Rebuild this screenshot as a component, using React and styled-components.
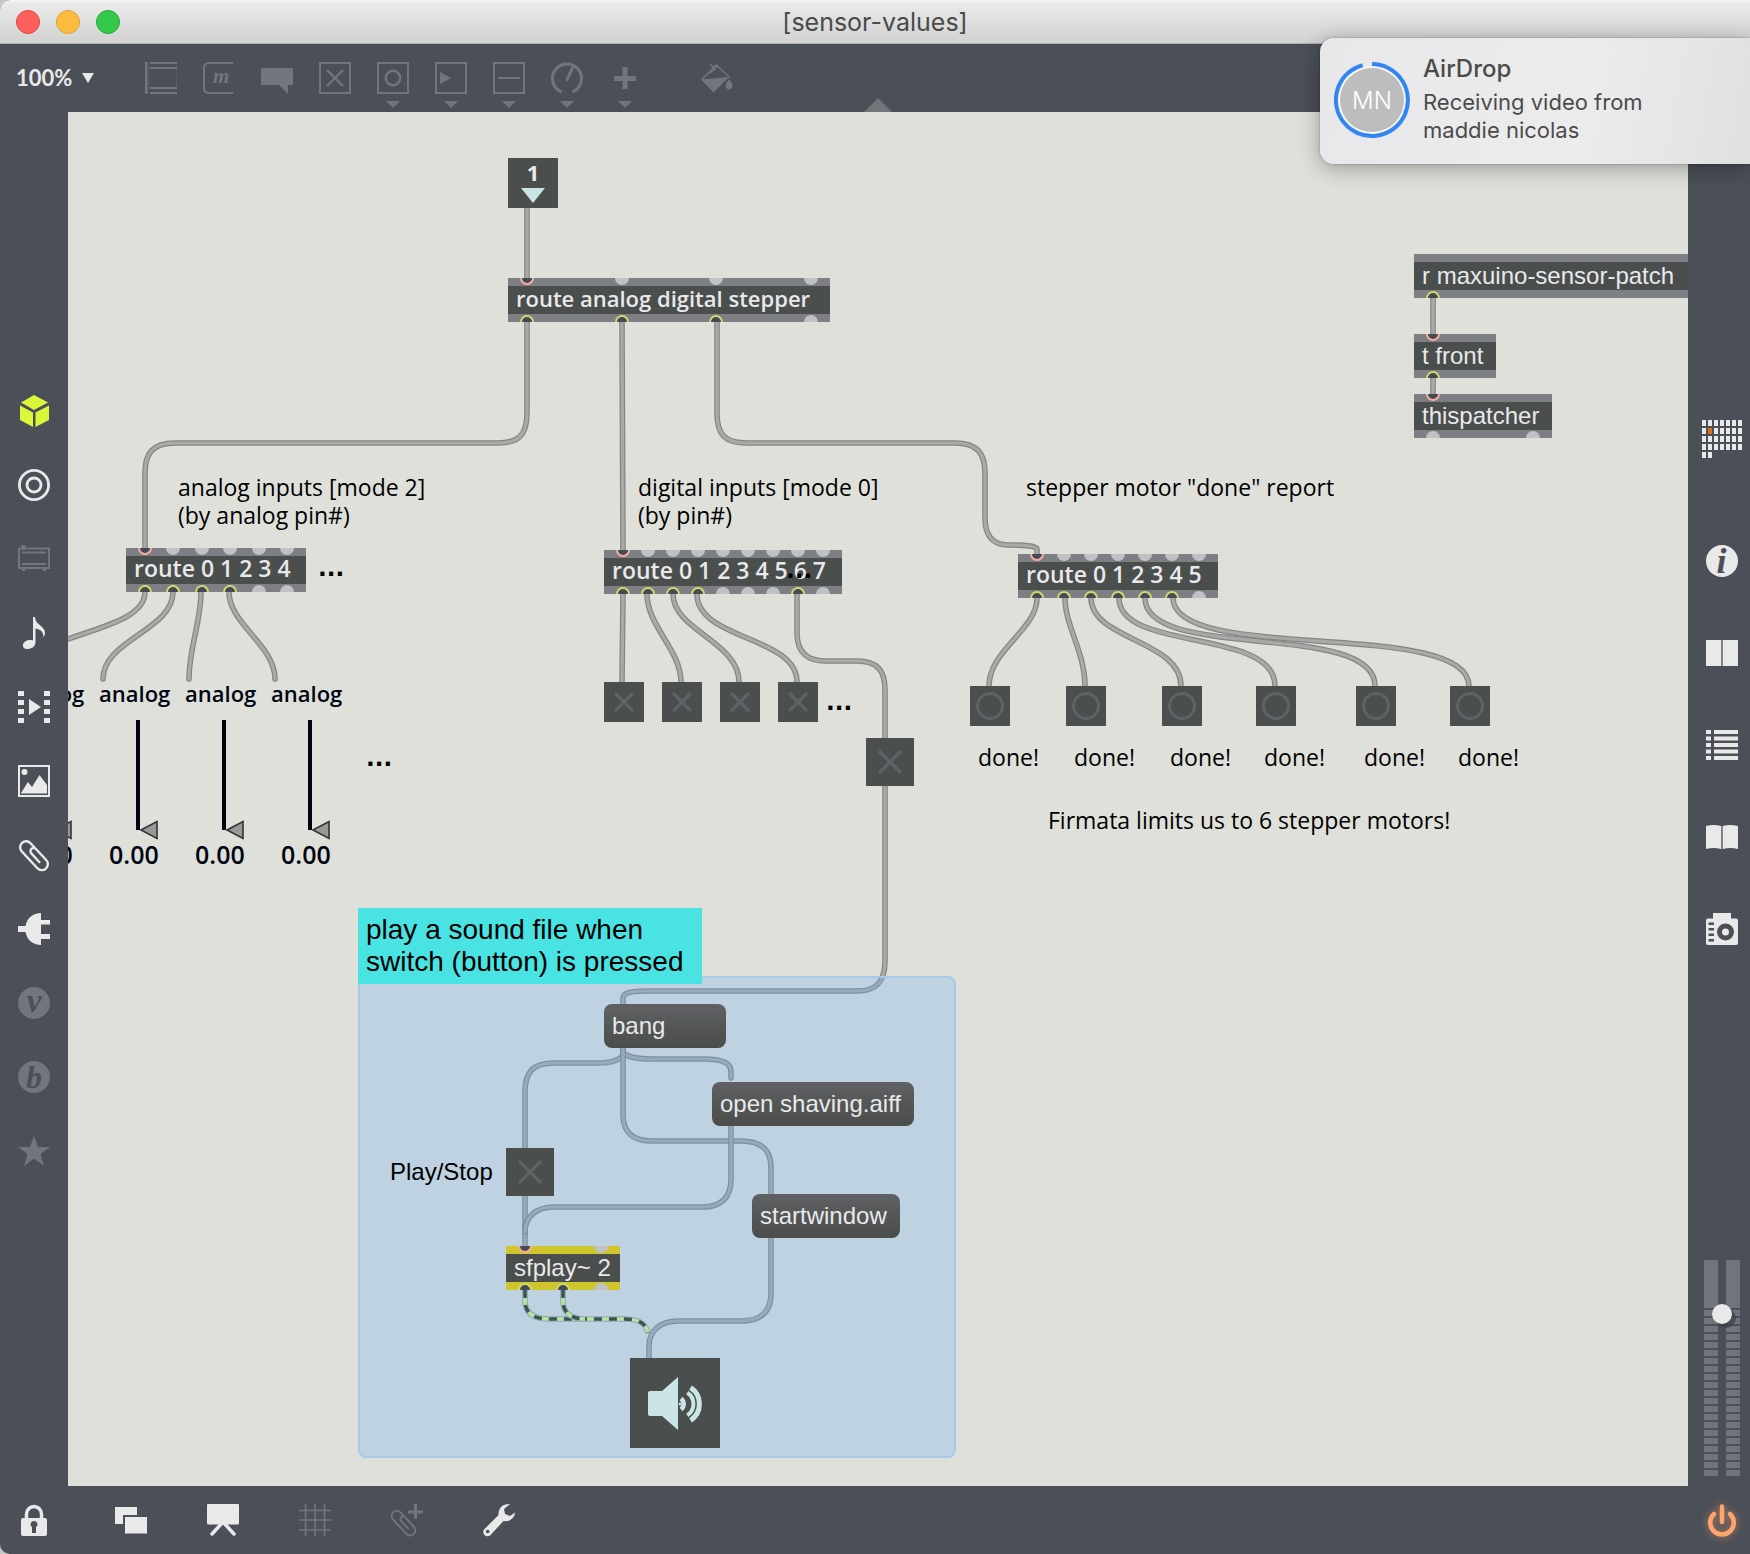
import React from "react";
import styled, { createGlobalStyle, css } from "styled-components";

const humanist = '"Open Sans", "Noto Sans", sans-serif';
const grotesque = '"Liberation Sans", Arial, sans-serif';
const system = 'Inter, "Liberation Sans", sans-serif';

const chrome = "#4b4f57";
const paper = "#dfe0da";
const dim = "#72757e";
const bright = "#e9e9e9";
const box = "#4a4e4c";
const boxInk = "#e9e9ec";

const GlobalStyle = createGlobalStyle`
  * { box-sizing: border-box; }
  body { margin: 0; background: #c4c6c8; font-family: ${system}; }
  button, input, select { font: inherit; color: inherit; }
`;

/* ---------- window frame ---------- */

const Window = styled.div`
  display: grid;
  grid-template-rows: 44px 68px 1fr 68px;
  min-height: 100vh;
  border-radius: 10px 0 0 10px;
  overflow: hidden;
  background: ${chrome};
`;

const TitleBar = styled.header`
  display: grid;
  grid-template-columns: 1fr auto 1fr;
  align-items: center;
  padding: 0 16px;
  background: linear-gradient(#f4f4f4, #e9e9e9 4px, #d2d2d2);
  border-bottom: 1px solid #abafaf;
`;

const TrafficLights = styled.div`
  display: flex;
  gap: 16px;
`;

const Light = styled.button`
  width: 24px;
  height: 24px;
  padding: 0;
  border: 1px solid ${(p) => p.$rim};
  border-radius: 50%;
  background: ${(p) => p.$fill};
`;

const Title = styled.h1`
  margin: 0;
  font-size: 25px;
  font-weight: 400;
  line-height: 28px;
  color: #4a4a4a;
`;

const ToolBar = styled.nav`
  display: flex;
  align-items: flex-start;
  gap: 26px;
  padding: 18px 16px 0;
  color: ${dim};
`;

const Zoom = styled.label`
  display: flex;
  align-items: center;
  gap: 8px;
  width: 103px;
  height: 32px;
  color: ${bright};
`;

const ZoomSelect = styled.select`
  appearance: none;
  width: 58px;
  padding: 0;
  border: 0;
  background: transparent;
  font-family: Lato, "Open Sans", sans-serif;
  font-size: 22px;
  font-weight: 700;
  line-height: 32px;
`;

const IconButton = styled.button`
  display: flex;
  flex: none;
  align-items: center;
  justify-content: center;
  width: 32px;
  height: ${(p) => (p.$tall ? "46px" : "32px")};
  margin-left: ${(p) => (p.$apart ? "34px" : "0")};
  padding: 0;
  border: 0;
  background: transparent;
  color: ${(p) => p.$tone || "inherit"};

  svg {
    display: block;
    flex: none;
    overflow: visible;
  }
`;

const Middle = styled.div`
  display: grid;
  grid-template-columns: 68px 1fr 62px;
`;

const LeftRail = styled.nav`
  display: flex;
  flex-direction: column;
  align-items: center;
  gap: 42px;
  padding-top: 283px;
`;

const RightRail = styled.nav`
  display: flex;
  flex-direction: column;
  align-items: center;
  justify-content: space-between;
  padding: 311px 0 10px;
  margin-left: 6px;
`;

const RailGroup = styled.div`
  display: flex;
  flex-direction: column;
  align-items: center;
  gap: 60px;

  & > :first-child {
    margin-bottom: 30px;
  }
`;

const BottomBar = styled.nav`
  display: flex;
  align-items: center;
  gap: 60px;
  padding: 0 12px 0 18px;
  color: ${bright};

  & > :first-child {
    margin-right: 5px;
  }
  & > :last-child {
    margin-left: auto;
  }
`;

/* ---------- patcher canvas ---------- */

const Frame = styled.main`
  position: relative;
  min-width: 0;
`;

const Handle = styled.svg`
  position: absolute;
  bottom: 100%;
  left: 50%;
  margin-left: -14px;
  display: block;
`;

const Patcher = styled.div`
  position: relative;
  height: 100%;
  min-height: 1374px;
  overflow: hidden;
  background: ${paper};
`;

/* The patch is scrolled by (68, 112), so its left edge is partly out of view. */
const Sheet = styled.div`
  position: absolute;
  left: -68px;
  top: -112px;
  width: 1800px;
  height: 1600px;
`;

const Cables = styled.svg`
  position: absolute;
  left: 0;
  top: 0;
`;

const placed = css`
  position: absolute;
  left: ${(p) => p.$x}px;
  top: ${(p) => p.$y}px;
`;

const ObjectFrame = styled.div`
  ${placed}
  width: ${(p) => p.$w}px;
  background: ${box};
`;

const PortStrip = styled.div`
  display: flex;
  justify-content: space-between;
  height: 8px;
  padding: 0 12px;
  align-items: ${(p) => (p.$outlets ? "flex-end" : "flex-start")};
  background: ${(p) => (p.$signal ? "#cfc52c" : "#7e7f84")};
`;

const Port = styled.span`
  width: 14px;
  height: 7px;
  border: ${(p) => (p.$live ? `2px solid ${p.$outlet ? "#cfd96c" : "#f4ada1"}` : "0")};
  ${(p) =>
    p.$outlet
      ? "border-bottom: 0; border-radius: 7px 7px 0 0;"
      : "border-top: 0; border-radius: 0 0 7px 7px;"}
  background: ${(p) => (p.$live ? "#464a54" : "#c0c1c4")};
`;

const ObjectText = styled.div`
  height: 28px;
  padding-left: 8px;
  white-space: nowrap;
  color: ${boxInk};
  font-family: ${(p) => (p.$arial ? grotesque : humanist)};
  font-size: ${(p) => p.$size}px;
  font-weight: ${(p) => (p.$arial ? 400 : 600)};
  line-height: ${(p) => (p.$arial ? "28px" : "24px")};
`;

const MessageButton = styled.button`
  ${placed}
  width: ${(p) => p.$w}px;
  height: 44px;
  padding: 0 8px;
  border: 0;
  border-radius: 8px;
  background: linear-gradient(#606165, #555857 45%, #4a4d4b);
  color: ${boxInk};
  font-family: ${grotesque};
  font-size: 24px;
  line-height: 28px;
  text-align: left;
  white-space: nowrap;
`;

const ToggleLabel = styled.label`
  ${placed}
  display: block;
  width: ${(p) => p.$size}px;
  height: ${(p) => p.$size}px;
  background: ${box};

  svg {
    display: block;
  }
`;

const HiddenInput = styled.input`
  position: absolute;
  inset: 0;
  width: 100%;
  height: 100%;
  margin: 0;
  opacity: 0;
`;

const SquareButton = styled.button`
  ${placed}
  width: ${(p) => p.$size}px;
  height: ${(p) => p.$size}px;
  padding: 0;
  border: 0;
  background: ${box};

  svg {
    display: block;
  }
`;

const Comment = styled.p`
  ${placed}
  margin: 0;
  white-space: pre;
  color: #000;
  font-family: ${(p) => (p.$arial ? grotesque : humanist)};
  font-size: ${(p) => (p.$arial ? "24px" : "23px")};
  line-height: 28px;
`;

const Dots = styled(Comment)`
  font-family: "DejaVu Sans", sans-serif;
  font-size: 23px;
  font-weight: 700;
`;

const Note = styled(Comment)`
  width: 344px;
  height: 76px;
  padding: 6px 8px;
  background: #4ae3e3;
  font-family: ${grotesque};
  font-size: 28px;
  line-height: 32px;
`;

const Panel = styled.div`
  ${placed}
  width: 598px;
  height: 482px;
  border: 2px solid #a9c9ea;
  border-radius: 8px;
  background: rgba(106, 175, 243, 0.28);
`;

const InletBox = styled.div`
  ${placed}
  display: flex;
  flex-direction: column;
  align-items: center;
  gap: 2px;
  width: 50px;
  height: 50px;
  background: ${box};
  color: ${boxInk};
  font-family: ${humanist};
  font-size: 22px;
  font-weight: 700;
  line-height: 28px;
`;

const AnalogStrip = styled.div`
  ${placed}
  display: flex;
  flex-direction: column;
  width: 80px;
  color: #000512;
  font-family: ${humanist};
  font-weight: 600;
`;

const AnalogName = styled.label`
  font-size: 22px;
  line-height: 28px;
`;

const Fader = styled.div`
  position: relative;
  width: 32px;
  height: 120px;
  margin: 13px 0 0 30px;

  svg {
    display: block;
  }
  input {
    writing-mode: vertical-lr;
    direction: rtl;
  }
`;

const NumberBox = styled.input`
  width: 64px;
  height: 28px;
  margin-left: 10px;
  padding: 0;
  border: 0;
  background: transparent;
  font-size: 25px;
  line-height: 28px;
`;

/* ---------- right-hand level meter ---------- */

const Gain = styled.div`
  position: relative;
  width: 36px;
  height: 216px;

  svg {
    display: block;
    overflow: visible;
  }
  input {
    writing-mode: vertical-lr;
    direction: rtl;
  }
`;

/* ---------- notification ---------- */

const Banner = styled.aside`
  position: absolute;
  top: 38px;
  right: 0;
  display: flex;
  gap: 13px;
  width: 430px;
  height: 126px;
  padding: 17px 14px;
  border-radius: 14px 0 0 14px;
  background: linear-gradient(100deg, #e8e8eb, #ececec 60%, #dfe1e1);
  box-shadow: 0 4px 22px rgba(0, 0, 0, 0.32), 0 0 2px rgba(0, 0, 0, 0.35);
  color: #4b4b4b;
`;

const Avatar = styled.div`
  display: grid;
  place-items: center;
  width: 76px;
  height: 76px;
  margin-top: 7px;
  color: #fff;
  font-size: 24px;
  font-weight: 300;

  & > * {
    grid-area: 1 / 1;
  }
`;

const BannerTitle = styled.h2`
  margin: 0 0 5px;
  font-size: 24px;
  font-weight: 500;
  line-height: 28px;
`;

const BannerText = styled.p`
  margin: 0;
  font-size: 22px;
  line-height: 28px;
`;

/* ---------- drawings ---------- */

const serifItalic = {
  fontFamily: '"Liberation Serif", serif',
  fontStyle: "italic",
  fontWeight: 700,
};

const Glyph = ({ h = 32, w = 32, children }) => (
  <svg width={w} height={h} viewBox={`0 0 ${w} ${h}`} fill="currentColor" aria-hidden="true">
    {children}
  </svg>
);

const SquareOutline = () => (
  <rect x="1" y="1" width="30" height="30" fill="none" stroke="currentColor" strokeWidth="2" />
);

const clipPath =
  "M5.5 1 V-11 a6 6 0 0 0 -12 0 V12 a6 6 0 0 0 12 0 V-3 a3.2 3.2 0 0 0 -6.4 0 V9";

const tools = [
  {
    name: "Object",
    art: (
      <>
        <path d="M0 0h2.5v32H0zM5 0h27v2H5zM5 5h27v2H5zM5 25h27v2H5zM5 30h27v2H5z" />
        <path d="M3 0h1v32H3zM31 7h1v18h-1z" opacity=".3" />
      </>
    ),
  },
  {
    name: "Message",
    art: (
      <>
        <path d="M30 1H6Q1 1 1 6V26Q1 31 6 31H30" fill="none" stroke="currentColor" strokeWidth="2" />
        <text x="10" y="21" fontSize="21" style={serifItalic}>m</text>
      </>
    ),
  },
  { name: "Comment", art: <path d="M0 6h32v17h-5v9l-9-9H0z" /> },
  {
    name: "Toggle",
    art: (
      <>
        <SquareOutline />
        <path d="M8 8l16 16M24 8L8 24" fill="none" stroke="currentColor" strokeWidth="2.4" />
      </>
    ),
  },
  {
    name: "Button",
    menu: true,
    art: (
      <>
        <SquareOutline />
        <circle cx="16" cy="16" r="7.2" fill="none" stroke="currentColor" strokeWidth="2.4" />
      </>
    ),
  },
  { name: "Number", menu: true, art: <><SquareOutline /><path d="M5 10l11 6-11 6z" /></> },
  { name: "Slider", menu: true, art: <><SquareOutline /><path d="M5 15h22v2H5z" /></> },
  {
    name: "Dial",
    menu: true,
    art: (
      <path
        d="M9.500 29.500A14.500 14.500 0 1 1 22.500 29.500M16 17.500L21.500 6"
        fill="none"
        stroke="currentColor"
        strokeWidth="3"
        strokeLinecap="round"
      />
    ),
  },
  { name: "Add", menu: true, art: <path d="M13.500 5h5v9H27v5h-8.500v8h-5v-8H5v-5h8.500z" /> },
  {
    name: "Format",
    apart: true,
    art: (
      <>
        <path d="M15 3L29 15.500M15 3L1 17.500M9 2l5.500 6" fill="none" stroke="currentColor" strokeWidth="1.600" />
        <path d="M17 3l-8 8" stroke="currentColor" strokeWidth="1.400" />
        <path d="M0 17.500L28 15 12.500 30.500zM28 17c3 4 4 6 3 8.500a3.200 3.200 0 0 1-6 0C24 23 25.500 21 28 17z" />
      </>
    ),
  },
];

const leftItems = [
  {
    name: "Objects",
    tone: "#dcf63a",
    art: <path d="M16 0L30 7.500 16 15 3 7.500zM2 10.500L15 17.500V32L2 25zM31 10.500L17.500 17.500V32L31 25z" />,
  },
  {
    name: "Max",
    tone: bright,
    art: (
      <g fill="none" stroke="currentColor" strokeWidth="2.800">
        <circle cx="16" cy="16" r="14.600" />
        <circle cx="16" cy="16" r="7" />
      </g>
    ),
  },
  {
    name: "Devices",
    tone: dim,
    art: (
      <>
        <path d="M1 5.500H31V25H1zM4 9.500H28M4 21H28" fill="none" stroke="currentColor" strokeWidth="2" />
        <circle cx="5.500" cy="4.500" r="2.500" />
        <circle cx="5.500" cy="26" r="2.200" />
        <circle cx="26.500" cy="26" r="2.200" />
      </>
    ),
  },
  {
    name: "Audio",
    tone: bright,
    art: (
      <path d="M15 0h2c.5 5 3 6.500 6 9 4.500 4 5 7.500 2.500 11.500 0-5-2-8-8-9V25c0 5-4.500 7-8 7s-5-2-4.500-4.500C5.500 24 11 22 15 23.500z" />
    ),
  },
  {
    name: "Video",
    tone: bright,
    art: (
      <path d="M0 0h6v5H0zM0 9h6v5H0zM0 18h6v5H0zM0 27h6v5H0zM26 0h6v5h-6zM26 9h6v5h-6zM26 18h6v5h-6zM26 27h6v5h-6zM11 8l12 8-12 8z" />
    ),
  },
  {
    name: "Images",
    tone: bright,
    art: (
      <>
        <SquareOutline />
        <path d="M3 28l7-11 4 5 7.500-12L29 20v8.500H3z" />
        <circle cx="6.500" cy="7" r="3" />
      </>
    ),
  },
  {
    name: "Clippings",
    tone: bright,
    art: (
      <path d={clipPath} transform="translate(16 16) rotate(-43)" fill="none" stroke="currentColor" strokeWidth="2.400" strokeLinecap="round" />
    ),
  },
  {
    name: "Plug-ins",
    tone: bright,
    art: <path d="M0 13h7.500C9 5 15 0 23 0v7h9v4.500h-9v9.500h9v5h-9v6C15 32 9 27 7.500 19H0z" />,
  },
  {
    name: "Vizzie",
    tone: dim,
    art: (
      <>
        <circle cx="16" cy="16" r="16" />
        <text x="16" y="25" fontSize="33" textAnchor="middle" fill={chrome} style={serifItalic}>v</text>
      </>
    ),
  },
  {
    name: "Beap",
    tone: dim,
    art: (
      <>
        <circle cx="16" cy="16" r="16" />
        <text x="16" y="27" fontSize="32" textAnchor="middle" fill={chrome} style={serifItalic}>b</text>
      </>
    ),
  },
  {
    name: "Favorites",
    tone: dim,
    art: <path d="M16 1l4 11h12l-9.500 7L26 31l-10-7.500L6 31l3.500-12L0 12h12z" />,
  },
];

const rightItems = [
  {
    name: "Inspector",
    art: (
      <>
        <circle cx="16" cy="16" r="16" />
        <text x="15.500" y="28" fontSize="36" textAnchor="middle" fill={chrome} style={serifItalic}>i</text>
      </>
    ),
  },
  {
    name: "Reference",
    art: <><path d="M0 3h15v26H0zM17 3h15v26H17z" /><path d="M15 3h2v26h-2z" fill="#7d858a" /></>,
  },
  {
    name: "Console",
    art: (
      <path d="M0 1h5v4H0zM8 1h24v4H8zM0 7.500h5v4H0zM8 7.500h24v4H8zM0 14h5v4H0zM8 14h24v4H8zM0 20.500h5v4H0zM8 20.500h24v4H8zM0 27h5v4H0zM8 27h24v4H8z" />
    ),
  },
  {
    name: "Lessons",
    art: (
      <>
        <path d="M0 5Q8 3 15 5V28Q8 26 0 28zM17 5Q24 3 32 5V28Q24 26 17 28z" />
        <path d="M15 5h2v23h-2z" fill="#7d858a" />
      </>
    ),
  },
  {
    name: "Snapshots",
    art: (
      <>
        <path d="M7 0h18v5.500h5q2 0 2 2V30q0 2-2 2H2q-2 0-2-2V7.500q0-2 2-2h5z" />
        <circle cx="19.500" cy="19" r="6" fill="none" stroke={chrome} strokeWidth="5" />
        <path d="M2.500 9.500h5.500v2.500H2.500zM2.500 15h5.500v2.500H2.500zM2.500 20.500h5.500v2.500H2.500zM2.500 26h5.500v2.500H2.500z" fill={chrome} />
      </>
    ),
  },
];

const bottomItems = [
  {
    name: "Lock",
    art: (
      <>
        <path d="M8.500 16V10a7.500 7.500 0 0 1 15 0v6" fill="none" stroke="currentColor" strokeWidth="3.500" />
        <path d="M5 14h22q2 0 2 2v14q0 2-2 2H5q-2 0-2-2V16q0-2 2-2z" />
        <path d="M16 17a3.300 3.300 0 0 1 2 6v6h-4v-6a3.300 3.300 0 0 1 2-6z" fill={chrome} />
      </>
    ),
  },
  {
    name: "New View",
    art: <path d="M0 3h22v8H8v9H0zM10 13h22v16.500H10z" />,
  },
  {
    name: "Presentation",
    art: (
      <>
        <path d="M1 0h30q1 0 1 1v18q0 1.500-1 1.500H1q-1 0-1-1.500V1q0-1 1-1z" />
        <path d="M16 18L5 30M16 18l11 12" fill="none" stroke="currentColor" strokeWidth="3.500" strokeLinecap="round" />
      </>
    ),
  },
  {
    name: "Grid",
    tone: dim,
    art: <path d="M6.500 0v32M16 0v32M25.500 0v32M0 6.500h32M0 16h32M0 26h32" stroke="currentColor" strokeWidth="1.600" />,
  },
  {
    name: "Add Clipping",
    tone: dim,
    art: (
      <>
        <path d={clipPath} transform="translate(12.500 18.500) rotate(-43) scale(.86)" fill="none" stroke="currentColor" strokeWidth="2.200" strokeLinecap="round" />
        <path d="M23 0h3v6.500h6v3h-6V15h-3V9.500h-6v-3h6z" />
      </>
    ),
  },
  {
    name: "Debug",
    art: (
      <>
        <path d="M27 0C20-.500 15 4 15.500 11L1.500 25a4.200 4.200 0 0 0 6 6L20.500 17C27 18 31.500 14 32 8.500L27 12 22 10 21 5z" />
        <circle cx="4.700" cy="27.500" r="1.800" fill={chrome} />
      </>
    ),
  },
];

const Matrix = () => (
  <Glyph w={40} h={38}>
    {Array.from({ length: 30 }, (_, i) => (
      <rect
        key={i}
        x={(i % 7) * 6}
        y={Math.floor(i / 7) * 8}
        width="4"
        height="6"
        fill={i === 8 ? "#d8701f" : bright}
      />
    ))}
  </Glyph>
);

const PowerIcon = () => (
  <Glyph>
    <g
      fill="none"
      stroke="#ffa46c"
      strokeWidth="4.500"
      strokeLinecap="round"
      style={{ filter: "drop-shadow(0 0 4px rgba(255,164,108,.6))" }}
    >
      <path d="M16 2.500V18M8 10A11.800 11.800 0 1 0 24 10" />
    </g>
  </Glyph>
);

/* ---------- patch parts ---------- */

function PatchObject({ x, y, w, text, ins, liveIns = [], outs, liveOuts = [], arial, signal, size }) {
  const ports = (count, live, outlet) =>
    Array.from({ length: count }, (_, i) => (
      <Port key={i} $live={live.includes(i)} $outlet={outlet} />
    ));
  return (
    <ObjectFrame $x={x} $y={y} $w={w}>
      <PortStrip $signal={signal}>{ports(ins, liveIns, false)}</PortStrip>
      <ObjectText $arial={arial} $size={size || (arial ? 24 : 23)}>{text}</ObjectText>
      <PortStrip $signal={signal} $outlets>{ports(outs, liveOuts, true)}</PortStrip>
    </ObjectFrame>
  );
}

function Toggle({ x, y, size = 40, name, id }) {
  const a = size / 4 + 1;
  const b = size - a;
  return (
    <ToggleLabel $x={x} $y={y} $size={size}>
      <HiddenInput type="checkbox" id={id} aria-label={name} />
      <svg width={size} height={size} aria-hidden="true">
        <path d={`M${a} ${a}L${b} ${b}M${b} ${a}L${a} ${b}`} stroke="#606166" strokeWidth="3.200" />
      </svg>
    </ToggleLabel>
  );
}

function Bang({ x, y }) {
  return (
    <SquareButton $x={x} $y={y} $size={40} aria-label="bang">
      <svg width="40" height="40" aria-hidden="true">
        <circle cx="20" cy="20" r="12.500" fill="none" stroke="#606166" strokeWidth="3.200" />
      </svg>
    </SquareButton>
  );
}

function Analog({ x, pin }) {
  return (
    <AnalogStrip $x={x} $y={679}>
      <AnalogName htmlFor={`pin-${pin}`}>analog</AnalogName>
      <Fader>
        <svg width="32" height="120" aria-hidden="true">
          <path d="M7 0h4v110H7z" fill="#000512" />
          <path d="M12 110l16-8.500v17z" fill="#999a98" stroke="#333" strokeWidth="1.600" />
        </svg>
        <HiddenInput type="range" id={`pin-${pin}`} defaultValue={0} />
      </Fader>
      <NumberBox defaultValue="0.00" aria-label={`analog ${pin} value`} />
    </AnalogStrip>
  );
}

const cables = [
  "M527 208V278",
  "M527 322V413C527 435 519 443 497 443H175C153 443 145 453 145 473V548",
  "M622 322L623 550",
  "M717 322V413C717 435 725 443 747 443H955C977 443 985 453 985 473V518C985 536 993 545 1008 545C1024 545 1037 546 1037 549V554",
  "M1433 298V334",
  "M1433 378V394",
  "M145 592C145 636 17 632 17 681",
  "M173 592C173 630 103 640 103 679",
  "M201 592C201 622 189 648 189 679",
  "M229 592C229 624 275 645 275 679",
  "M623 594L622 682",
  "M647 594C647 626 681 650 681 682",
  "M673 594C673 630 739 642 739 682",
  "M697 594C697 640 797 636 797 682",
  "M797 594V633C797 653 808 661 825 661H857C877 661 885 670 885 690V738",
  "M1037 598C1037 630 989 650 989 686",
  "M1065 598C1065 626 1085 652 1085 686",
  "M1091 598C1091 640 1181 640 1181 686",
  "M1119 598C1119 652 1275 628 1275 686",
  "M1145 598C1145 662 1375 620 1375 686",
  "M1173 598C1173 664 1469 618 1469 686",
  "M885 786V961C885 981 877 991 857 991H648C630 991 623 993 623 998V1004",
  "M623 1048V1055C619 1061 607 1063 597 1063H554C533 1063 525 1072 525 1092V1148",
  "M623 1048V1053C629 1058 643 1059 652 1059H704C725 1059 731 1064 731 1072V1078",
  "M623 1048V1115C623 1133 634 1141 652 1141H741C762 1141 771 1150 771 1168V1194",
  "M525 1196V1246",
  "M731 1126V1180C731 1197 721 1207 703 1207H554C536 1207 525 1217 525 1232",
  "M771 1238V1293C771 1311 762 1321 741 1321H678C659 1321 649 1332 649 1346V1358",
];

const signalCables = [
  "M525 1290V1301C525 1313 533 1319 550 1319H625C640 1319 646 1324 648 1333",
  "M563 1290V1301C563 1312 570 1319 585 1319",
];

function Patch() {
  return (
    <Sheet>
      <Cables width="1800" height="1600" fill="none" strokeLinecap="round" aria-hidden="true">
        {cables.map((d) => (
          <g key={d}>
            <path d={d} stroke="#858584" strokeWidth="5.600" />
            <path d={d} stroke="#a9a9a7" strokeWidth="3.200" />
          </g>
        ))}
      </Cables>
      <Panel $x={358} $y={976} />
      <Cables width="1800" height="1600" fill="none" aria-hidden="true">
        {signalCables.map((d) => (
          <g key={d}>
            <path d={d} stroke="#92a7bd" strokeWidth="5.600" />
            <path d={d} stroke="#b6e69b" strokeWidth="3.600" />
            <path d={d} stroke="#3c5453" strokeWidth="3.600" strokeDasharray="8 7" />
          </g>
        ))}
      </Cables>

      <InletBox $x={508} $y={158}>
        1
        <svg width="24" height="15" aria-hidden="true">
          <path d="M0 0h24L12 15z" fill="#cbe5e7" />
        </svg>
      </InletBox>
      <PatchObject x={508} y={278} w={322} text="route analog digital stepper" size={22} ins={4} liveIns={[0]} outs={4} liveOuts={[0, 1, 2]} />
      <PatchObject x={1414} y={254} w={290} text="r maxuino-sensor-patch" ins={0} outs={1} liveOuts={[0]} arial />
      <PatchObject x={1414} y={334} w={82} text="t front" ins={1} liveIns={[0]} outs={1} liveOuts={[0]} arial />
      <PatchObject x={1414} y={394} w={138} text="thispatcher" ins={1} liveIns={[0]} outs={2} arial />

      <Comment $x={178} $y={473}>{"analog inputs [mode 2]\n(by analog pin#)"}</Comment>
      <Comment $x={638} $y={473}>{"digital inputs [mode 0]\n(by pin#)"}</Comment>
      <Comment $x={1026} $y={473}>stepper motor "done" report</Comment>

      <PatchObject x={126} y={548} w={180} text="route 0 1 2 3 4" ins={6} liveIns={[0]} outs={6} liveOuts={[0, 1, 2, 3]} />
      <PatchObject x={604} y={550} w={238} text="route 0 1 2 3 4 5 6 7" ins={9} liveIns={[0]} outs={9} liveOuts={[0, 1, 2, 3, 7]} />
      <PatchObject x={1018} y={554} w={200} text="route 0 1 2 3 4 5" ins={7} liveIns={[0]} outs={7} liveOuts={[0, 1, 2, 3, 4, 5]} />

      <Dots $x={318} $y={554}>...</Dots>
      <Dots $x={366} $y={744}>...</Dots>
      <Dots $x={786} $y={556}>...</Dots>
      <Dots $x={826} $y={688}>...</Dots>

      {[13, 99, 185, 271].map((x, pin) => (
        <Analog key={x} x={x} pin={pin} />
      ))}
      {[604, 662, 720, 778].map((x, pin) => (
        <Toggle key={x} x={x} y={682} name={`digital ${pin}`} />
      ))}
      <Toggle x={866} y={738} size={48} name="digital 6" />

      {[970, 1066, 1162, 1256, 1356, 1450].map((x) => (
        <React.Fragment key={x}>
          <Bang x={x} y={686} />
          <Comment $x={x + 8} $y={743}>done!</Comment>
        </React.Fragment>
      ))}
      <Comment $x={1048} $y={806}>Firmata limits us to 6 stepper motors!</Comment>

      <Note $x={358} $y={908}>{"play a sound file when\nswitch (button) is pressed"}</Note>
      <MessageButton $x={604} $y={1004} $w={122}>bang</MessageButton>
      <MessageButton $x={712} $y={1082} $w={202}>open shaving.aiff</MessageButton>
      <MessageButton $x={752} $y={1194} $w={148}>startwindow</MessageButton>
      <Comment as="label" htmlFor="play" $x={390} $y={1158} $arial>Play/Stop</Comment>
      <Toggle x={506} y={1148} size={48} id="play" />
      <PatchObject x={506} y={1246} w={114} text="sfplay~ 2" ins={2} liveIns={[0]} outs={3} liveOuts={[0, 1]} arial signal />
      <SquareButton $x={630} $y={1358} $size={90} aria-label="audio on/off">
        <svg width="90" height="90" fill="#cbe5e7" aria-hidden="true">
          <path d="M20 33q-2 0-2 2v21q0 2 2 2h12l16 14V19L32 33z" />
          <g fill="none" stroke="#cbe5e7">
            <path d="M60.600 29.700A19.500 19.500 0 0 1 60.600 62.300" strokeWidth="5" />
            <path d="M57.300 34.700A13.500 13.500 0 0 1 57.300 57.300" strokeWidth="4" />
            <path d="M51 40.500A7 7 0 0 1 51 51.500" strokeWidth="4.500" />
          </g>
          <circle cx="50" cy="46" r="1.400" />
        </svg>
      </SquareButton>
    </Sheet>
  );
}

function LevelMeter() {
  return (
    <Gain>
      <svg width="36" height="216" aria-hidden="true">
        {[0, 22].map((x) => (
          <g key={x} fill="#70747d">
            <rect x={x} y="0" width="14" height="48" />
            {Array.from({ length: 21 }, (_, i) => (
              <rect key={i} x={x} y={50 + i * 8} width="14" height="6" />
            ))}
          </g>
        ))}
        <circle cx="22" cy="58" r="10" fill="#3c3f44" opacity=".75" />
        <circle cx="18" cy="54" r="10" fill={bright} />
      </svg>
      <HiddenInput type="range" defaultValue={75} aria-label="gain" />
    </Gain>
  );
}

export default function App() {
  return (
    <>
      <GlobalStyle />
      <Window>
        <TitleBar>
          <TrafficLights>
            <Light $fill="#fc605c" $rim="#e0443e" aria-label="Close" />
            <Light $fill="#fdbc40" $rim="#de9f34" aria-label="Minimize" />
            <Light $fill="#34c84a" $rim="#24a732" aria-label="Zoom" />
          </TrafficLights>
          <Title>[sensor-values]</Title>
        </TitleBar>

        <ToolBar>
          <Zoom>
            <ZoomSelect aria-label="Zoom level" defaultValue="100%">
              <option>100%</option>
            </ZoomSelect>
            <svg width="12" height="10" aria-hidden="true">
              <path d="M0 0h12L6 10z" fill="currentColor" />
            </svg>
          </Zoom>
          {tools.map((t) => (
            <IconButton key={t.name} aria-label={t.name} $tall $apart={t.apart}>
              <Glyph h={46}>
                {t.art}
                {t.menu && <path d="M9 39h14l-7 7z" />}
              </Glyph>
            </IconButton>
          ))}
        </ToolBar>

        <Middle>
          <LeftRail>
            {leftItems.map((t) => (
              <IconButton key={t.name} aria-label={t.name} $tone={t.tone}>
                <Glyph>{t.art}</Glyph>
              </IconButton>
            ))}
          </LeftRail>
          <Frame>
            <Handle width="28" height="14" aria-hidden="true">
              <path d="M14 0l14 14H0z" fill="#717478" />
            </Handle>
            <Patcher>
              <Patch />
            </Patcher>
          </Frame>
          <RightRail>
            <RailGroup>
              <IconButton aria-label="Calendar">
                <Matrix />
              </IconButton>
              {rightItems.map((t) => (
                <IconButton key={t.name} aria-label={t.name} $tone={bright}>
                  <Glyph>{t.art}</Glyph>
                </IconButton>
              ))}
            </RailGroup>
            <LevelMeter />
          </RightRail>
        </Middle>

        <BottomBar>
          {bottomItems.map((t) => (
            <IconButton key={t.name} aria-label={t.name} $tone={t.tone}>
              <Glyph>{t.art}</Glyph>
            </IconButton>
          ))}
          <IconButton aria-label="Audio power">
            <PowerIcon />
          </IconButton>
        </BottomBar>
      </Window>

      <Banner>
        <Avatar>
          <svg width="76" height="76" aria-hidden="true">
            <circle cx="38" cy="38" r="34" fill="#f4f4f4" />
            <circle cx="38" cy="38" r="32" fill="#bdbdbd" />
            <path d="M38 2A36 36 0 1 1 28.700 3.200" fill="none" stroke="#3386f2" strokeWidth="4" />
          </svg>
          <span>MN</span>
        </Avatar>
        <div>
          <BannerTitle>AirDrop</BannerTitle>
          <BannerText>
            Receiving video from
            <br />
            maddie nicolas
          </BannerText>
        </div>
      </Banner>
    </>
  );
}
